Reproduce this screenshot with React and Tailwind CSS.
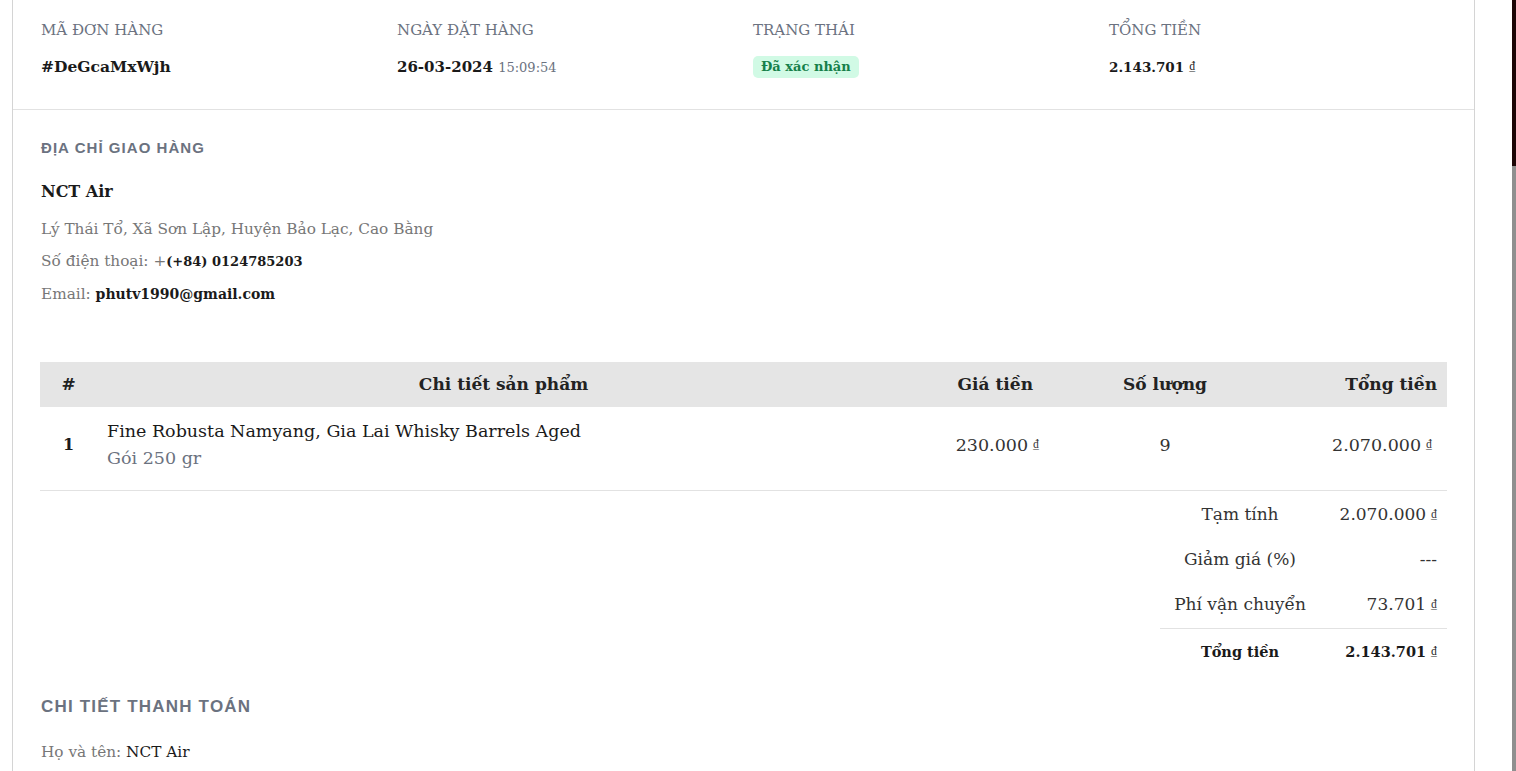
const serif = "font-['DejaVu_Serif','Liberation_Serif',serif]";
const sans = "font-['Liberation_Sans','Noto_Sans',sans-serif]";

function Dong() {
  return <span className="ml-[5px] align-[3px] text-[11.5px] leading-none font-normal">₫</span>;
}

const cols = 'grid grid-cols-[57px_813px_133px_244px_160px]';

export default function App() {
  return (
    <div className={`${serif} flex min-h-screen bg-white text-[#1a1a1a]`}>
      <div className="min-w-0 flex-1 pl-3 pr-[37px]">
        <div className="min-h-screen border-x border-[#d4d4d4]">
          {/* Order summary */}
          <div className="grid grid-cols-4 gap-x-[19px] border-b border-[#e2e2e2] px-[28px] pt-[21px] pb-[32px]">
            <div>
              <div className="h-[18px] text-[15px] leading-[18px] text-[#6b7280]">MÃ ĐƠN HÀNG</div>
              <div className="mt-[18px] h-5 text-[15.5px] font-bold leading-[20px]">#DeGcaMxWjh</div>
            </div>
            <div>
              <div className="h-[18px] text-[15px] leading-[18px] text-[#6b7280]">NGÀY ĐẶT HÀNG</div>
              <div className="mt-[18px] h-5 text-[15px] font-bold leading-[20px]">
                26-03-2024 <span className="text-[13px] font-normal text-[#6b7280]">15:09:54</span>
              </div>
            </div>
            <div>
              <div className="h-[18px] text-[15px] leading-[18px] text-[#6b7280]">TRẠNG THÁI</div>
              <div className="mt-[18px] flex h-5 items-center">
                <span className="inline-flex h-[22px] items-center rounded-[5px] bg-[#d1fae5] px-2 text-[13px] font-bold text-[#16804a]">
                  Đã xác nhận
                </span>
              </div>
            </div>
            <div>
              <div className="h-[18px] text-[15px] leading-[18px] text-[#6b7280]">TỔNG TIỀN</div>
              <div className="mt-[18px] flex h-5 items-center text-[13.5px] font-bold">
                2.143.701<Dong />
              </div>
            </div>
          </div>

          <div className="px-[28px]">
            {/* Shipping address */}
            <div className={`${sans} pt-[28px] text-[15px] font-bold leading-[20px] tracking-[0.07em] text-[#6b7280]`}>ĐỊA CHỈ GIAO HÀNG</div>
            <div className="mt-[22px] text-[16px] font-bold leading-[24px]">NCT Air</div>
            <div className="mt-[9px] text-[15.3px] leading-[32px] text-[#777]">
              <div>Lý Thái Tổ, Xã Sơn Lập, Huyện Bảo Lạc, Cao Bằng</div>
              <div>
                Số điện thoại: +<span className="text-[13px] font-bold text-[#1a1a1a]">(+84) 0124785203</span>
              </div>
              <div>
                Email: <span className="text-[14px] font-bold text-[#1a1a1a]">phutv1990@gmail.com</span>
              </div>
            </div>

            {/* Products */}
            <div className="-mx-px mt-[52px]">
              <div className={`${cols} h-[45px] items-center bg-[#e5e5e5] text-[17px] font-bold text-[#222]`}>
                <div className="text-center">#</div>
                <div className="text-center">Chi tiết sản phẩm</div>
                <div className="pr-[10px] text-right">Giá tiền</div>
                <div className="text-center">Số lượng</div>
                <div className="pr-[10px] text-right">Tổng tiền</div>
              </div>
              <div className={`${cols} items-center border-b border-[#e2e2e2] pt-[11px] pb-[18px] text-[17.5px]`}>
                <div className="text-center text-[16px] font-bold">1</div>
                <div className="pl-[10px]">
                  <div className="leading-[27px]">Fine Robusta Namyang, Gia Lai Whisky Barrels Aged</div>
                  <div className="leading-[27px] text-[#6b7280]">Gói 250 gr</div>
                </div>
                <div className="pr-[4px] text-right text-[#333]">
                  230.000<Dong />
                </div>
                <div className="text-center text-[#333]">9</div>
                <div className="pr-[15px] text-right text-[#333]">
                  2.070.000<Dong />
                </div>
              </div>
            </div>

            {/* Totals */}
            <div className="-mr-px ml-auto grid w-[287px] grid-cols-[160px_127px] text-[17px] text-[#333]">
              <div className="flex h-[47px] items-center justify-center">Tạm tính</div>
              <div className="flex h-[47px] items-center justify-end pr-[10px]">
                2.070.000<Dong />
              </div>
              <div className="flex h-[44px] items-center justify-center">Giảm giá (%)</div>
              <div className="flex h-[44px] items-center justify-end pr-[10px]">---</div>
              <div className="flex h-[46px] items-center justify-center">Phí vận chuyển</div>
              <div className="flex h-[46px] items-center justify-end pr-[10px]">
                73.701<Dong />
              </div>
              <div className="col-span-2 grid grid-cols-[160px_127px] border-t border-[#e2e2e2] text-[14.5px] font-bold text-[#1a1a1a]">
                <div className="flex h-[46px] items-center justify-center">Tổng tiền</div>
                <div className="flex h-[46px] items-center justify-end pr-[10px]">
                  2.143.701<Dong />
                </div>
              </div>
            </div>

            {/* Payment details */}
            <div className={`${sans} mt-[22px] text-[17px] font-bold leading-[20px] tracking-[0.07em] text-[#6b7280]`}>CHI TIẾT THANH TOÁN</div>
            <div className="mt-[25px] text-[15.3px] leading-[20px] text-[#777]">
              Họ và tên: <span className="text-[#1a1a1a]">NCT Air</span>
            </div>
          </div>
        </div>
      </div>

      {/* Page scrollbar */}
      <div className="flex w-1 flex-col">
        <div className="h-[166px] bg-[#1c0606]" />
        <div className="flex-1 bg-[#8f8f8f]" />
      </div>
    </div>
  );
}
